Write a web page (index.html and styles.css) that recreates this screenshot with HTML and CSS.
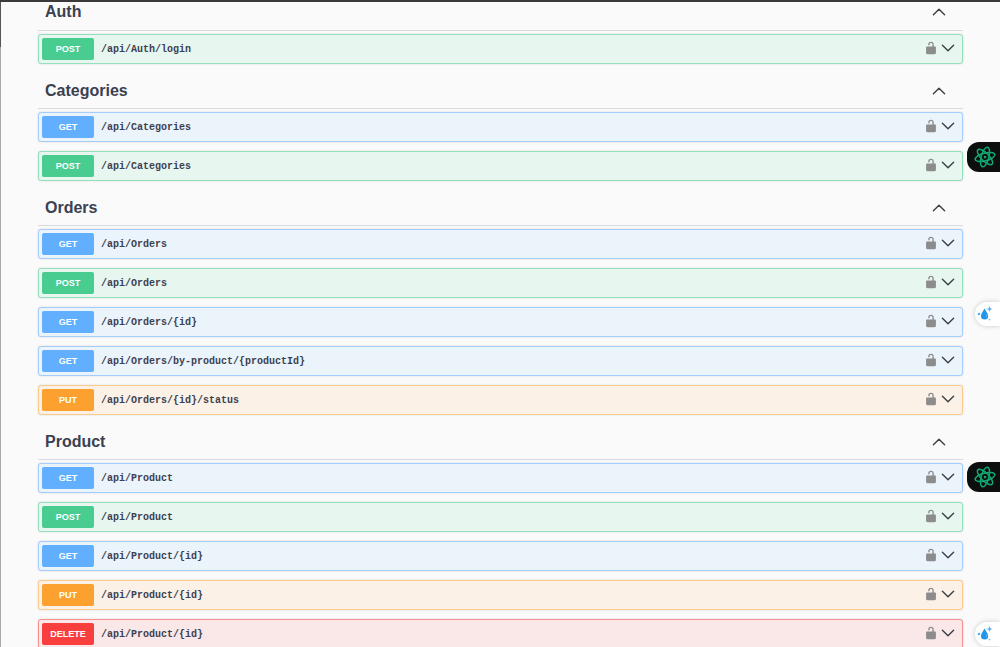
FILE: index.html
```html
<!doctype html>
<html lang="en">
    <head>
        <meta charset="UTF-8" />
        <meta name="viewport" content="width=device-width, initial-scale=1.0" />
        <title>API Documentation</title>
        <link rel="stylesheet" href="styles.css">
    </head>
    <body>
        <svg class="icons" aria-hidden="true">
            <symbol id="arrow-up" viewBox="0 0 20 20">
                <path d="M2 14l8-8 8 8" />
            </symbol>
            <symbol id="arrow-down" viewBox="0 0 20 20">
                <path d="M2 6l8 8 8-8" />
            </symbol>
            <symbol id="unlocked" viewBox="0 0 20 20">
                <path d="M15.8 8H14V5.6C14 2.7 12.7 1 10 1 7.2 1 6 2.7 6 5.6V6h2v-.8C8 3.7 8.7 3 10 3s2 .7 2 2.2V8H4c-.6 0-1 .6-1 1.2V17c0 .7.5 1.3 1.1 1.5l1.2.4c.5.1 1.2.1 1.7.1h6c.5 0 1.200 0 1.7-.2l1.2-.3c.6-.2 1.1-.8 1.1-1.5V9.2c0-.6-.6-1.2-1.2-1.2z" />
            </symbol>
            <symbol id="knot" viewBox="0 0 24 24">
                <g fill="none" stroke="currentColor" stroke-width="1.6">
                    <ellipse cx="12" cy="12" rx="11" ry="4.2" transform="rotate(-15 12 12)" />
                    <ellipse cx="12" cy="12" rx="11" ry="4.2" transform="rotate(45 12 12)" />
                    <ellipse cx="12" cy="12" rx="11" ry="4.2" transform="rotate(105 12 12)" />
                </g>
                <circle cx="12" cy="12" r="1.5" fill="currentColor" />
            </symbol>
            <symbol id="drop" viewBox="0 0 16 16">
                <path fill="#2196e8" d="M7.5 2.5C6 5.5 4 7.4 4 10a3.6 3.6 0 0 0 7.2 0c0-2.600-2.200-4.500-3.700-7.500z" />
                <path fill="#8bd3fa" d="M8.5 7.5c1 1.2 1.4 2.7.5 4 1.6-.6 1.6-2.5-.5-4z" />
                <path fill="#4bb0f3" d="M12.5 0l.8 2.200 2.200.8-2.200.8-.8 2.200-.8-2.200-2.200-.8 2.200-.8z" />
                <circle cx="2" cy="8" r="1.3" fill="#4bb0f3" />
                <circle cx="12.5" cy="13.5" r="1" fill="#8bd3fa" />
            </symbol>
        </svg>

        <main class="container">
            <section>
                <div class="tag">
                    <h3>Auth</h3>
                    <button class="toggle" aria-label="Collapse Auth"><svg><use href="#arrow-up" /></svg></button>
                </div>
                <div class="opblock post">
                    <button class="summary"><span class="method">POST</span><span class="path">/api/Auth/login</span></button>
                    <button class="lock" aria-label="Authorize"><svg><use href="#unlocked" /></svg></button>
                    <button class="toggle" aria-label="Expand"><svg><use href="#arrow-down" /></svg></button>
                </div>
            </section>

            <section>
                <div class="tag">
                    <h3>Categories</h3>
                    <button class="toggle" aria-label="Collapse Categories"><svg><use href="#arrow-up" /></svg></button>
                </div>
                <div class="opblock get">
                    <button class="summary"><span class="method">GET</span><span class="path">/api/Categories</span></button>
                    <button class="lock" aria-label="Authorize"><svg><use href="#unlocked" /></svg></button>
                    <button class="toggle" aria-label="Expand"><svg><use href="#arrow-down" /></svg></button>
                </div>
                <div class="opblock post">
                    <button class="summary"><span class="method">POST</span><span class="path">/api/Categories</span></button>
                    <button class="lock" aria-label="Authorize"><svg><use href="#unlocked" /></svg></button>
                    <button class="toggle" aria-label="Expand"><svg><use href="#arrow-down" /></svg></button>
                </div>
            </section>

            <section>
                <div class="tag">
                    <h3>Orders</h3>
                    <button class="toggle" aria-label="Collapse Orders"><svg><use href="#arrow-up" /></svg></button>
                </div>
                <div class="opblock get">
                    <button class="summary"><span class="method">GET</span><span class="path">/api/Orders</span></button>
                    <button class="lock" aria-label="Authorize"><svg><use href="#unlocked" /></svg></button>
                    <button class="toggle" aria-label="Expand"><svg><use href="#arrow-down" /></svg></button>
                </div>
                <div class="opblock post">
                    <button class="summary"><span class="method">POST</span><span class="path">/api/Orders</span></button>
                    <button class="lock" aria-label="Authorize"><svg><use href="#unlocked" /></svg></button>
                    <button class="toggle" aria-label="Expand"><svg><use href="#arrow-down" /></svg></button>
                </div>
                <div class="opblock get">
                    <button class="summary"><span class="method">GET</span><span class="path">/api/Orders/{id}</span></button>
                    <button class="lock" aria-label="Authorize"><svg><use href="#unlocked" /></svg></button>
                    <button class="toggle" aria-label="Expand"><svg><use href="#arrow-down" /></svg></button>
                </div>
                <div class="opblock get">
                    <button class="summary"><span class="method">GET</span><span class="path">/api/Orders/by-product/{productId}</span></button>
                    <button class="lock" aria-label="Authorize"><svg><use href="#unlocked" /></svg></button>
                    <button class="toggle" aria-label="Expand"><svg><use href="#arrow-down" /></svg></button>
                </div>
                <div class="opblock put">
                    <button class="summary"><span class="method">PUT</span><span class="path">/api/Orders/{id}/status</span></button>
                    <button class="lock" aria-label="Authorize"><svg><use href="#unlocked" /></svg></button>
                    <button class="toggle" aria-label="Expand"><svg><use href="#arrow-down" /></svg></button>
                </div>
            </section>

            <section>
                <div class="tag">
                    <h3>Product</h3>
                    <button class="toggle" aria-label="Collapse Product"><svg><use href="#arrow-up" /></svg></button>
                </div>
                <div class="opblock get">
                    <button class="summary"><span class="method">GET</span><span class="path">/api/Product</span></button>
                    <button class="lock" aria-label="Authorize"><svg><use href="#unlocked" /></svg></button>
                    <button class="toggle" aria-label="Expand"><svg><use href="#arrow-down" /></svg></button>
                </div>
                <div class="opblock post">
                    <button class="summary"><span class="method">POST</span><span class="path">/api/Product</span></button>
                    <button class="lock" aria-label="Authorize"><svg><use href="#unlocked" /></svg></button>
                    <button class="toggle" aria-label="Expand"><svg><use href="#arrow-down" /></svg></button>
                </div>
                <div class="opblock get">
                    <button class="summary"><span class="method">GET</span><span class="path">/api/Product/{id}</span></button>
                    <button class="lock" aria-label="Authorize"><svg><use href="#unlocked" /></svg></button>
                    <button class="toggle" aria-label="Expand"><svg><use href="#arrow-down" /></svg></button>
                </div>
                <div class="opblock put">
                    <button class="summary"><span class="method">PUT</span><span class="path">/api/Product/{id}</span></button>
                    <button class="lock" aria-label="Authorize"><svg><use href="#unlocked" /></svg></button>
                    <button class="toggle" aria-label="Expand"><svg><use href="#arrow-down" /></svg></button>
                </div>
                <div class="opblock delete">
                    <button class="summary"><span class="method">DELETE</span><span class="path">/api/Product/{id}</span></button>
                    <button class="lock" aria-label="Authorize"><svg><use href="#unlocked" /></svg></button>
                    <button class="toggle" aria-label="Expand"><svg><use href="#arrow-down" /></svg></button>
                </div>
            </section>
        </main>

        <!-- floating side buttons -->
        <button class="side chat chat-top" aria-label="Chat"><svg><use href="#knot" /></svg></button>
        <button class="side water water-top" aria-label="Clean"><svg><use href="#drop" /></svg></button>
        <button class="side chat chat-bottom" aria-label="Chat"><svg><use href="#knot" /></svg></button>
        <button class="side water water-bottom" aria-label="Clean"><svg><use href="#drop" /></svg></button>
    </body>
</html>
```

FILE: styles.css
```css
* {
    box-sizing: border-box;
}

html {
    height: 100%;
    overflow: hidden;
}

body {
    font-family: "Liberation Sans", Arial, sans-serif;
    background: #fafafa linear-gradient(#555 47px, #a8a8a8 47px) left top / 1px 100% no-repeat;
    color: #3b4151;
    margin: 0;
    height: 100%;
    overflow: hidden;
    border-top: 2px solid #3b3939;
}

button {
    font: inherit;
    color: inherit;
    background: none;
    border: none;
    padding: 0;
    cursor: pointer;
}

svg {
    display: block;
    fill: currentColor;
}

.icons {
    display: none;
}

/* the list starts slightly scrolled */
.container {
    margin-top: -8px;
    padding: 0 37px 0 38px;
}

.tag {
    display: flex;
    align-items: center;
    justify-content: space-between;
    height: 37px;
    margin-bottom: 3px;
    padding: 0 17px 0 7px;
    border-bottom: 1px solid #d8dade;
}

/* keep the later groups on the same rhythm as the rows */
section + section .tag {
    height: 36px;
}

.tag h3 {
    margin: 0;
    font-size: 16px;
    line-height: 20px;
}

.toggle svg {
    width: 14px;
    height: 14px;
    fill: none;
    stroke: #3b4045;
    stroke-width: 2;
    stroke-linecap: round;
    stroke-linejoin: round;
}

.opblock {
    display: flex;
    align-items: center;
    height: 30px;
    margin-bottom: 9px;
    padding: 0 7px 0 3px;
    border: 1px solid;
    border-radius: 3px;
    box-shadow: 0 0 2px rgba(0, 0, 0, 0.15);
}

.opblock .lock,
.opblock .toggle {
    padding-bottom: 2px;
}

.summary {
    display: flex;
    flex: 1;
    align-items: center;
    gap: 7px;
}

.method {
    width: 52px;
    border-radius: 2px;
    color: #fff;
    font-size: 9px;
    font-weight: bold;
    line-height: 22px;
    text-align: center;
}

.path {
    font-family: "Liberation Mono", monospace;
    font-size: 10px;
    font-weight: bold;
}

.lock {
    margin-right: 3px;
    color: #8c8c8c;
}

.lock svg {
    width: 14px;
    height: 14px;
}

.get {
    background-color: #ebf3fb;
    border-color: #a3cdfb;
}

.get .method {
    background-color: #61affe;
}

.post {
    background-color: #e8f6f0;
    border-color: #94dfbc;
}

.post .method {
    background-color: #49cc90;
}

.put {
    background-color: #fbf1e6;
    border-color: #fccb8c;
}

.put .method {
    background-color: #fca130;
}

.delete {
    background-color: #fae7e7;
    border-color: #f78f8f;
}

.delete .method {
    background-color: #f93e3e;
}

.side {
    position: fixed;
    right: 0;
}

.chat {
    width: 33px;
    height: 30px;
    padding-left: 7px;
    border-radius: 12px 0 0 12px;
    background-color: #0d0f0f;
    color: #12a873;
}

.chat svg {
    width: 22px;
    height: 22px;
}

.water {
    width: 25px;
    height: 24px;
    padding-left: 2px;
    border-radius: 12px 0 0 12px;
    background-color: #fff;
    box-shadow: 0 0 5px rgba(0, 0, 0, 0.2);
}

.water svg {
    width: 16px;
    height: 16px;
}

.chat-top {
    top: 142px;
}

.water-top {
    top: 302px;
}

.chat-bottom {
    top: 462px;
}

.water-bottom {
    top: 622px;
}
```
